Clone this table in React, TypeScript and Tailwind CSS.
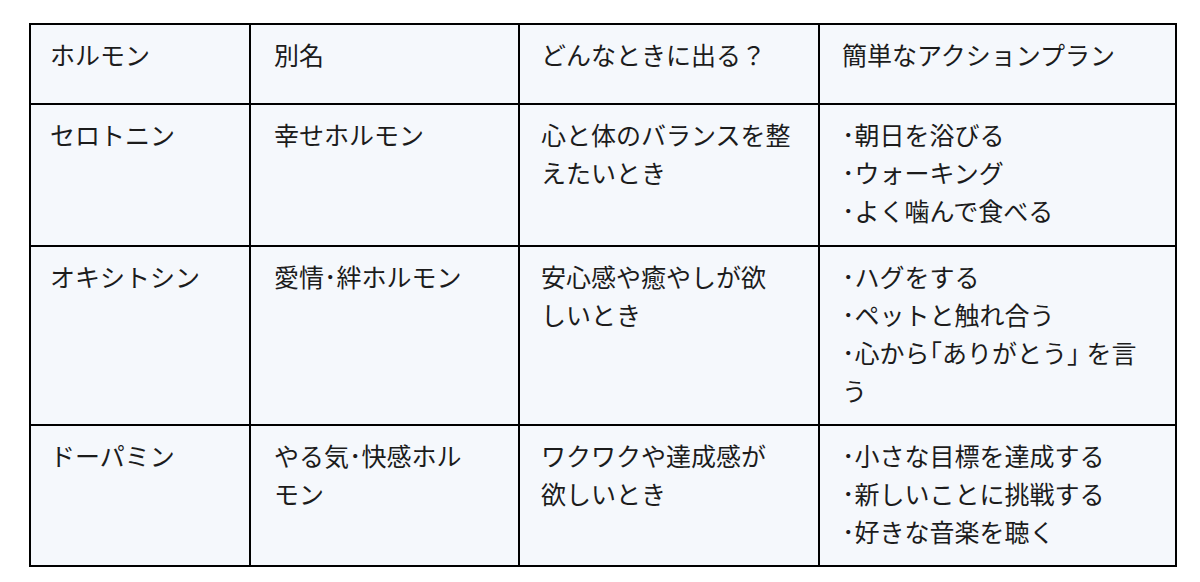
const rows: { h: string; cells: string[][] }[] = [
  {
    h: "h-[80px]",
    cells: [["ホルモン"], ["別名"], ["どんなときに出る？"], ["簡単なアクションプラン"]],
  },
  {
    h: "h-[142px]",
    cells: [
      ["セロトニン"],
      ["幸せホルモン"],
      ["心と体のバランスを整", "えたいとき"],
      ["･朝日を浴びる", "･ウォーキング", "･よく噛んで食べる"],
    ],
  },
  {
    h: "h-[179px]",
    cells: [
      ["オキシトシン"],
      ["愛情･絆ホルモン"],
      ["安心感や癒やしが欲", "しいとき"],
      ["･ハグをする", "･ペットと触れ合う", "･心から｢ありがとう｣ を言", "う"],
    ],
  },
  {
    h: "h-[141px]",
    cells: [
      ["ドーパミン"],
      ["やる気･快感ホル", "モン"],
      ["ワクワクや達成感が", "欲しいとき"],
      ["･小さな目標を達成する", "･新しいことに挑戦する", "･好きな音楽を聴く"],
    ],
  },
];

const colW = ["w-[220px] pl-[19px]", "w-[269px] pl-[23px]", "w-[300px] pl-[21px]", "w-[357px] pl-[22px]"];

export default function App() {
  return (
    <div className="w-[1200px] h-[582px] bg-white pt-[23px] pl-[29px] font-['Liberation_Sans','Noto_Sans_CJK_JP',sans-serif] text-[25px] leading-[38px] text-[#1c1c1c]">
      <div className="w-[1148px] border-l-2 border-t-2 border-black">
        {rows.map((r, i) => (
          <div key={i} className={`flex ${r.h}`}>
            {r.cells.map((lines, j) => (
              <div
                key={j}
                className={`${colW[j]} shrink-0 overflow-hidden whitespace-nowrap border-r-2 border-b-2 border-black bg-[#f5f8fc] pt-[12px]`}
              >
                {lines.map((l, k) => (
                  <div key={k}>{l}</div>
                ))}
              </div>
            ))}
          </div>
        ))}
      </div>
    </div>
  );
}
